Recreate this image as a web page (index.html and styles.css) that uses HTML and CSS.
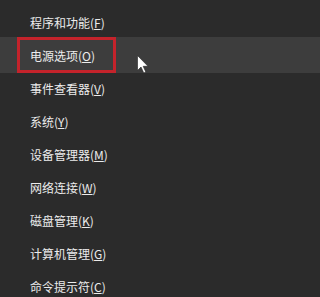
FILE: index.html
```html
<!DOCTYPE html>
<html lang="zh-CN">
<head>
<meta charset="utf-8">
<title>菜单</title>
<link rel="stylesheet" href="styles.css">
</head>
<body>
<ul class="menu">
  <li class="item">程序和功能(<u>F</u>)</li>
  <li class="item active">电源选项(<u>O</u>)
    <span class="mark"></span>
    <svg class="cursor" width="12" height="19" viewBox="0 0 12 19"><path d="M0.5 0.5 L0.5 15.5 L4 12 L6.8 18 L8.8 17 L6.2 11.3 L11 11.3 Z" fill="#ffffff" stroke="#222" stroke-width="0.6"/></svg>
  </li>
  <li class="item">事件查看器(<u>V</u>)</li>
  <li class="item">系统(<u>Y</u>)</li>
  <li class="item">设备管理器(<u>M</u>)</li>
  <li class="item">网络连接(<u>W</u>)</li>
  <li class="item">磁盘管理(<u>K</u>)</li>
  <li class="item">计算机管理(<u>G</u>)</li>
  <li class="item">命令提示符(<u>C</u>)</li>
</ul>
</body>
</html>
```
FILE: styles.css
```css
html, body {
  margin: 0;
  padding: 0;
  background: #2b2b2b;
  overflow: hidden;
}
.menu {
  list-style: none;
  margin: 0;
  padding: 6px 0 0 0;
  font-family: "Noto Sans CJK SC", "Microsoft YaHei", sans-serif;
  font-size: 12px;
  color: #ececec;
}
.item {
  height: 33px;
  display: flex;
  align-items: center;
  padding-left: 30px;
  white-space: nowrap;
}
.item u {
  text-decoration: underline;
  text-underline-offset: 1px;
}
.item.active {
  position: relative;
  height: 36px;
  margin: -2px 0 -1px 0;
  background: #3d3d3d;
}
.mark {
  position: absolute;
  left: 17px;
  top: 0;
  width: 99px;
  height: 36px;
  box-sizing: border-box;
  border: 3px solid #c4232b;
}
.cursor {
  position: absolute;
  left: 137px;
  top: 18px;
}
```
